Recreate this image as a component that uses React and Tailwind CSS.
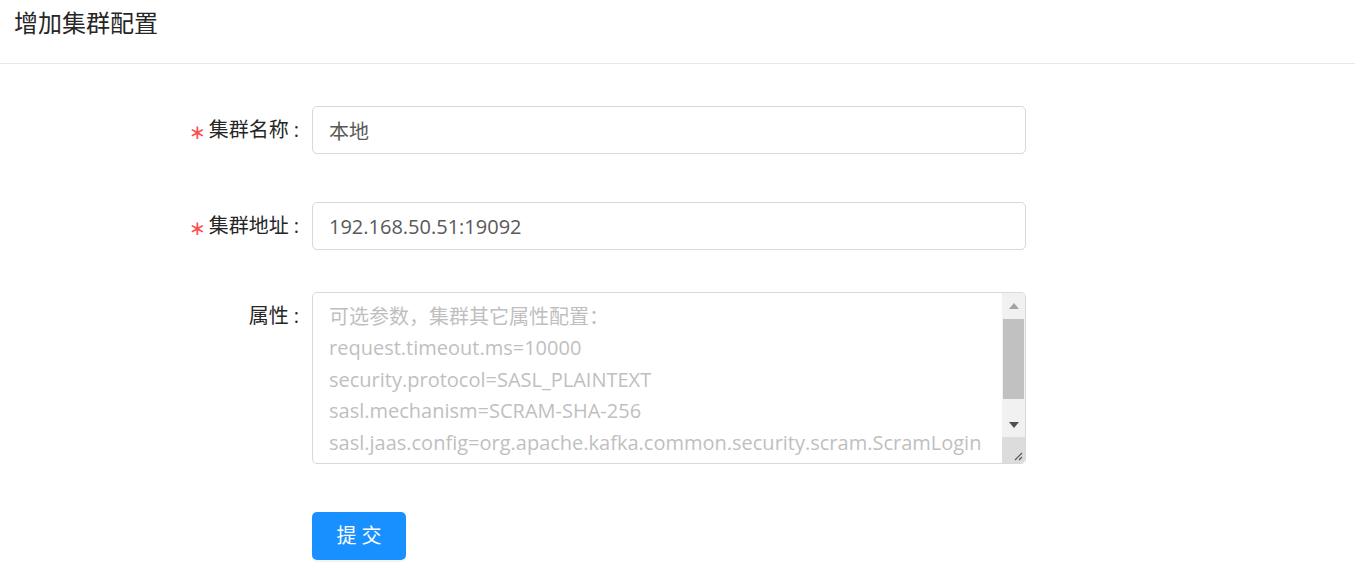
import React from 'react';

const FONT = "font-['Open_Sans','Noto_Sans_CJK_SC',sans-serif]";

const placeholder = [
  '可选参数，集群其它属性配置：',
  'request.timeout.ms=10000',
  'security.protocol=SASL_PLAINTEXT',
  'sasl.mechanism=SCRAM-SHA-256',
  'sasl.jaas.config=org.apache.kafka.common.security.scram.ScramLoginModule required username="admin" password="admin";',
].join('\n');

function Label({ required, children }) {
  return (
    <div className="w-[312px] shrink-0 flex justify-end items-center h-[48px] text-[20px] text-[#262626]">
      {required && <span className="text-[#ff4d4f] text-[20px] mr-[3px] translate-y-[2px]">∗</span>}
      <span>{children}</span>
      <span className="ml-[5px] mr-[13px]">:</span>
    </div>
  );
}

function Scrollbar() {
  return (
    <div className="w-[23px] shrink-0 flex flex-col bg-[#f1f1f1]">
      <div className="h-[26px] flex items-center justify-center">
        <svg width="10" height="6" viewBox="0 0 10 6"><path d="M0 6 L5 0 L10 6 Z" fill="#a3a3a3" /></svg>
      </div>
      <div className="mx-[1px] h-[80px] bg-[#c1c1c1]" />
      <div className="flex-1" />
      <div className="h-[24px] flex items-center justify-center">
        <svg width="10" height="6" viewBox="0 0 10 6"><path d="M0 0 L10 0 L5 6 Z" fill="#505050" /></svg>
      </div>
      <div className="h-[26px] bg-[#dcdcdc] flex items-end justify-end p-[2px]">
        <svg width="10" height="10" viewBox="0 0 10 10">
          <path d="M9 2 L2 9 M9 6 L6 9" stroke="#555" strokeWidth="1.2" />
        </svg>
      </div>
    </div>
  );
}

export default function App() {
  return (
    <div className={`${FONT} bg-white w-[1355px] h-[576px] overflow-hidden`}>
      <div className="h-[64px] border-b border-[#e8e8e8] px-[14px] flex items-center pb-[18px]">
        <h1 className="text-[24px] text-[#262626] leading-none">增加集群配置</h1>
      </div>

      <div className="pt-[42px]">
        <div className="flex items-start">
          <Label required>集群名称</Label>
          <input
            className="w-[714px] h-[48px] border border-[#d9d9d9] rounded-[5px] px-[16px] text-[20px] text-[#595959] outline-none"
            defaultValue="本地"
          />
        </div>

        <div className="flex items-start mt-[48px]">
          <Label required>集群地址</Label>
          <input
            className="w-[714px] h-[48px] border border-[#d9d9d9] rounded-[5px] px-[16px] text-[20px] text-[#595959] outline-none"
            defaultValue="192.168.50.51:19092"
          />
        </div>

        <div className="flex items-start mt-[42px]">
          <Label>属性</Label>
          <div className="w-[714px] h-[172px] border border-[#d9d9d9] rounded-[5px] flex overflow-hidden">
            <textarea
              className="flex-1 h-full resize-none overflow-hidden pl-[16px] pr-[10px] pt-[8px] text-[20px] leading-[31.4px] text-[#595959] placeholder:text-[#bfbfbf] outline-none break-all"
              placeholder={placeholder}
            />
            <Scrollbar />
          </div>
        </div>

        <div className="flex mt-[48px]">
          <div className="w-[312px] shrink-0" />
          <button className="w-[94px] h-[48px] rounded-[5px] bg-[#1890ff] text-white text-[20px] shadow-[0_2px_0_rgba(0,0,0,0.045)]">
            提 交
          </button>
        </div>
      </div>
    </div>
  );
}
